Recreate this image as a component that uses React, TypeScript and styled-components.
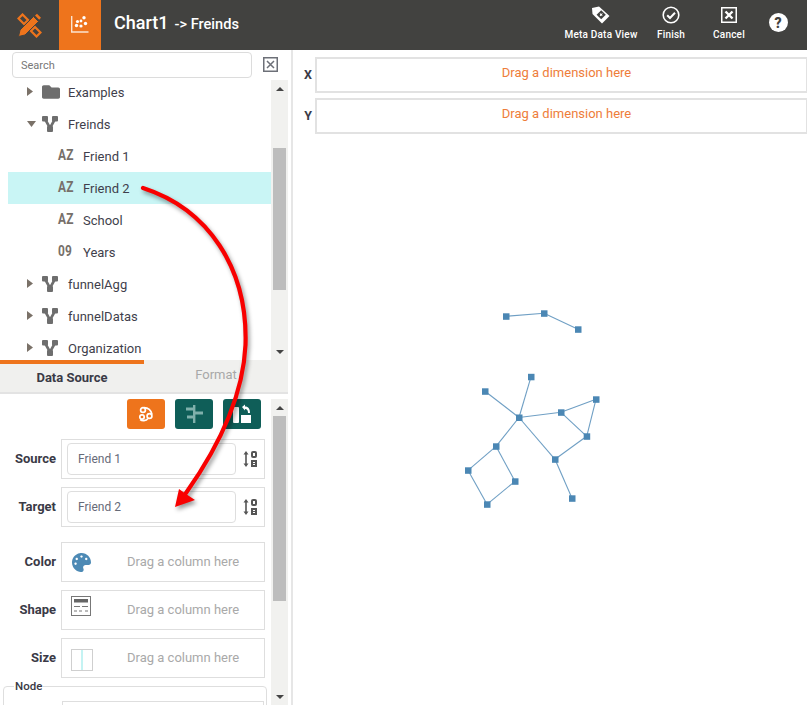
import React from "react";
import styled, { createGlobalStyle } from "styled-components";
import { FaFolder, FaPalette } from "react-icons/fa";

const Global = createGlobalStyle`
  html, body { margin: 0; padding: 0; height: 705px; overflow: hidden; background: #fff; }
  * { box-sizing: border-box; }
  body { font-family: Roboto, "Liberation Sans", sans-serif; }
`;

const Page = styled.div`
  position: relative;
  width: 807px;
  height: 705px;
  display: flex;
  flex-direction: column;
  overflow: hidden;
`;

const Header = styled.header`
  height: 50px;
  flex: none;
  background: #424240;
  display: flex;
  align-items: stretch;
  color: #fff;
`;
const LogoCell = styled.div`
  width: 59px;
  display: flex;
  align-items: center;
  padding-left: 17px;
`;
const ChartCell = styled.div`
  width: 42px;
  background: #ee741c;
  display: flex;
  align-items: center;
  justify-content: center;
`;
const Title = styled.div`
  margin-left: 13px;
  display: flex;
  align-items: baseline;
  padding-top: 12px;
  font-weight: 500;
`;
const ChartName = styled.span`
  font-size: 18px;
`;
const Crumb = styled.span`
  font-size: 14.6px;
  margin-left: 6px;
`;
const Actions = styled.div`
  margin-left: auto;
  display: flex;
  padding-right: 8px;
`;
const Action = styled.div<{ $w: number }>`
  width: ${(p) => p.$w}px;
  display: flex;
  flex-direction: column;
  align-items: center;
  padding-top: 2px;
`;
const ActionIcon = styled.div`
  height: 26px;
  display: flex;
  align-items: center;
  justify-content: center;
`;
const ActionLabel = styled.span`
  margin-top: 1px;
  font-size: 10px;
  font-weight: 500;
  letter-spacing: 0.2px;
  line-height: 12px;
  white-space: nowrap;
`;
const HelpCell = styled.div`
  width: 42px;
  display: flex;
  justify-content: center;
  padding-top: 13px;
`;
const HelpBadge = styled.span`
  width: 19px;
  height: 19px;
  border-radius: 50%;
  background: #fff;
  color: #424240;
  font-size: 14px;
  font-weight: 900;
  display: flex;
  align-items: center;
  justify-content: center;
`;

const Body = styled.div`
  flex: 1;
  display: flex;
  min-height: 0;
`;
const LeftPane = styled.aside`
  width: 293px;
  flex: none;
  padding-right: 3px;
  border-right: 2px solid #e6e6e6;
  display: flex;
  flex-direction: column;
`;
const SearchRow = styled.div`
  height: 30px;
  flex: none;
  display: flex;
  padding: 2px 0 0 12px;
`;
const SearchBox = styled.div`
  width: 240px;
  height: 26px;
  border: 1px solid #dcdcdc;
  border-radius: 4px;
  padding-left: 8px;
  font-size: 11px;
  color: #777;
  display: flex;
  align-items: center;
`;
const CloseSquare = styled.div`
  margin: 5px 0 0 11px;
  width: 15px;
  height: 15px;
  display: flex;
`;
const TreeArea = styled.div`
  height: 280px;
  flex: none;
  display: flex;
`;
const TreeViewport = styled.div`
  flex: 1;
  overflow: hidden;
  padding-left: 8px;
`;
const TreeRows = styled.div`
  margin-top: -4px;
`;
const Row = styled.div<{ $selected?: boolean; $child?: boolean }>`
  height: 32px;
  display: flex;
  align-items: center;
  padding-left: ${(p) => (p.$child ? 50 : 18)}px;
  background: ${(p) => (p.$selected ? "#c9f5f5" : "transparent")};
  font-size: 13px;
  color: #3f3f4c;
`;
const Expander = styled.span`
  width: 16px;
  height: 12px;
  flex: none;
  display: flex;
  align-items: center;
`;
const NodeIcon = styled.span`
  width: 26px;
  flex: none;
  display: flex;
  align-items: center;
  color: #6e6e6e;
`;
const TypeTag = styled.span`
  width: 25px;
  flex: none;
  font-size: 14px;
  font-weight: 700;
  color: #77706a;
  letter-spacing: 0.2px;
  transform: scaleX(0.85) translateY(-1px);
  transform-origin: left center;
`;

const Track = styled.div`
  width: 17px;
  flex: none;
  background: #f1f1ef;
  display: flex;
  flex-direction: column;
  align-items: center;
`;
const ArrowCell = styled.div<{ $down?: boolean }>`
  height: 17px;
  flex: none;
  margin-top: ${(p) => (p.$down ? "auto" : "0")};
  display: flex;
  align-items: center;
  justify-content: center;
  &::after {
    content: "";
    border-left: 4px solid transparent;
    border-right: 4px solid transparent;
    ${(p) =>
      p.$down ? "border-top: 4px solid #444;" : "border-bottom: 4px solid #444;"}
  }
`;
const Thumb = styled.div<{ $top: number; $h: number }>`
  width: 13px;
  height: ${(p) => p.$h}px;
  margin-top: ${(p) => p.$top}px;
  background: #bdbdbd;
  flex: none;
`;

const Tabs = styled.div`
  height: 34px;
  flex: none;
  position: relative;
  display: flex;
  background: #f0f0ee;
  border-bottom: 2px solid #e3e3e3;
`;
const TabMarker = styled.div`
  position: absolute;
  left: 0;
  top: 0;
  width: 144px;
  height: 4px;
  background: #ee741c;
`;
const Tab = styled.div<{ $active?: boolean }>`
  width: 144px;
  display: flex;
  justify-content: center;
  padding-top: ${(p) => (p.$active ? 10 : 7)}px;
  font-size: 13px;
  line-height: 16px;
  font-weight: ${(p) => (p.$active ? 700 : 400)};
  color: ${(p) => (p.$active ? "#3a3a46" : "#a8a8a8")};
`;

const Panel = styled.div`
  flex: 1;
  min-height: 0;
  display: flex;
  padding-top: 5px;
`;
const PanelContent = styled.div`
  width: 271px;
  flex: none;
  display: flex;
  flex-direction: column;
`;
const ButtonBar = styled.div`
  display: flex;
  justify-content: flex-end;
  gap: 10px;
  padding-right: 10px;
  margin-bottom: 10px;
`;
const ToolButton = styled.div<{ $bg: string }>`
  width: 38px;
  height: 30px;
  border-radius: 3px;
  background: ${(p) => p.$bg};
  display: flex;
  align-items: center;
  justify-content: center;
`;
const FieldRow = styled.div<{ $mb: number }>`
  display: flex;
  align-items: center;
  margin-bottom: ${(p) => p.$mb}px;
`;
const FieldLabel = styled.div`
  width: 56px;
  padding-bottom: 2px;
  text-align: right;
  font-size: 13px;
  font-weight: 700;
  color: #3a3a46;
`;
const FieldBox = styled.div`
  margin-left: 5px;
  width: 204px;
  height: 40px;
  border: 1px solid #dedede;
  display: flex;
  align-items: center;
  padding-left: 5px;
`;
const FieldInput = styled.div`
  width: 169px;
  height: 32px;
  border: 1px solid #dedede;
  border-radius: 4px;
  padding-left: 10px;
  font-size: 12px;
  color: #666a78;
  display: flex;
  align-items: center;
`;
const SortWrap = styled.div`
  margin-left: 6px;
  display: flex;
`;
const ColumnIcon = styled.div`
  width: 60px;
  flex: none;
  display: flex;
  align-items: center;
`;
const DragHint = styled.span`
  flex: 1;
  padding-bottom: 2px;
  font-size: 13px;
  color: #a9a9a9;
`;
const NodeSet = styled.fieldset`
  margin: 0 4px 0 3px;
  padding: 0;
  height: 60px;
  border: 1px solid #dedede;
  border-radius: 4px;
  min-width: 0;
`;
const NodeLegend = styled.legend`
  margin-left: 10px;
  padding: 0 1px;
  font-size: 11.5px;
  line-height: 10px;
  font-weight: 500;
  color: #3a3a46;
`;
const NodeInner = styled.div`
  margin: 10px 2px 0 58px;
  height: 30px;
  border: 1px solid #dedede;
`;

const RightPane = styled.main`
  flex: 1;
  min-width: 0;
  position: relative;
  display: flex;
  flex-direction: column;
  padding-top: 7px;
  gap: 5px;
`;
const DropRow = styled.div`
  display: flex;
  align-items: center;
`;
const AxisLabel = styled.div`
  width: 22px;
  padding: 0 3px 2px 0;
  text-align: right;
  font-size: 12.5px;
  font-weight: 700;
  color: #3a3a46;
`;
const DropBox = styled.div`
  flex: 1;
  height: 36px;
  padding-left: 10px;
  border: 2px solid #e2e2e2;
  border-right-width: 1px;
  text-align: center;
  font-size: 13px;
  line-height: 28px;
  color: #ee7d3a;
`;
const GraphCanvas = styled.svg`
  flex: 1;
  display: block;
  width: 100%;
`;
const ArrowOverlay = styled.svg`
  position: absolute;
  left: 0;
  top: 0;
  width: 808px;
  height: 705px;
  pointer-events: none;
  filter: drop-shadow(2px 3px 2px rgba(0, 0, 0, 0.4));
`;

const Caret = ({ down }: { down?: boolean }) =>
  down ? (
    <svg width="12" height="8" viewBox="0 0 12 8">
      <path d="M1 1h9L5.5 7z" fill="#7a7168" />
    </svg>
  ) : (
    <svg width="8" height="12" viewBox="0 0 8 12">
      <path d="M1 1v9l6-4.5z" fill="#7a7168" />
    </svg>
  );

const GraphGlyph = () => (
  <svg width="16" height="16" viewBox="0 0 16 16" fill="#6e6e6e">
    <rect x="0" y="0" width="6" height="5.5" rx="1" />
    <rect x="10" y="0" width="6" height="5.5" rx="1" />
    <rect x="5" y="10" width="6" height="6" rx="1" />
    <path d="M3 3 L8 12 L13 3" fill="none" stroke="#6e6e6e" strokeWidth="2.6" />
  </svg>
);

const SortGlyph = () => (
  <svg width="16" height="18" viewBox="0 0 16 18">
    <path d="M4 1 L1.5 4.5H3.2V13.5H1.5L4 17L6.5 13.5H4.8V4.5H6.5Z" fill="#555" />
    <rect x="9" y="1" width="6" height="7" rx="2" fill="#555" />
    <rect x="11" y="3" width="2" height="3" fill="#fff" />
    <rect x="9" y="10" width="6" height="7" fill="#555" />
    <rect x="11" y="12" width="2" height="1" fill="#fff" />
    <rect x="11" y="14" width="2" height="1" fill="#fff" />
  </svg>
);

const tree = [
  { label: "Examples", kind: "folder" },
  { label: "Freinds", kind: "graph", open: true },
  { label: "Friend 1", tag: "AZ" },
  { label: "Friend 2", tag: "AZ", selected: true },
  { label: "School", tag: "AZ" },
  { label: "Years", tag: "09" },
  { label: "funnelAgg", kind: "graph" },
  { label: "funnelDatas", kind: "graph" },
  { label: "Organization", kind: "graph" },
];

const nodes: Record<string, [number, number]> = {
  a: [506, 316.3], b: [544, 313.3], c: [578, 329.3],
  d: [531, 376.8], e: [485, 391.3], f: [519, 417.5], g: [561, 412.3],
  h: [596, 399.3], i: [586.7, 436.3], j: [555, 459.3], k: [572, 498.3],
  l: [496, 446.3], m: [468, 470.3], n: [515, 481.3], o: [487, 504.3],
};
const edges = ["ab", "bc", "df", "ef", "fg", "gh", "hi", "gi", "ij", "fj", "jk", "fl", "lm", "ln", "mo", "no"];

const GRAPH_LEFT = 293;
const GRAPH_TOP = 139;

export default function App() {
  return (
    <Page>
      <Global />
      <Header>
        <LogoCell>
          <svg width="25" height="25" viewBox="0 0 25 25" fill="none">
            <path d="M1.5 5.5 L5.5 1.5 L11 7 L7 11 Z" stroke="#ee741c" strokeWidth="2.2" />
            <path d="M14 18 L18 14 L23.5 19.5 L19.5 23.5 Z" stroke="#ee741c" strokeWidth="2.2" />
            <path d="M1.5 23.5 L3 17 L16.5 3.5 L21.5 8.5 L8 22 Z" fill="#ee741c" stroke="#424240" strokeWidth="1" />
            <path d="M18 2.5 L20 0.8 L24 4.8 L22.2 6.8 Z" fill="#ee741c" />
          </svg>
        </LogoCell>
        <ChartCell>
          <svg width="18" height="18" viewBox="0 0 18 18" fill="#fff">
            <path d="M0.7 0V16H17.5" fill="none" stroke="#fbe3cf" strokeWidth="1.4" />
            <circle cx="5.5" cy="9.5" r="1.7" />
            <circle cx="10" cy="10" r="1.6" />
            <circle cx="6.5" cy="5.5" r="1.6" />
            <circle cx="10" cy="5" r="1.4" />
            <circle cx="14.5" cy="7.5" r="1.7" />
            <circle cx="13" cy="1.8" r="1.7" />
          </svg>
        </ChartCell>
        <Title>
          <ChartName>Chart1</ChartName>
          <Crumb>-&gt; Freinds</Crumb>
        </Title>
        <Actions>
          <Action $w={80}>
            <ActionIcon>
              <svg width="20" height="20" viewBox="0 0 20 20">
                <path d="M1 3 L8 1.5 L18.5 11 L11 18.5 L1.5 9 Z" fill="#fff" />
                <rect x="7" y="6.5" width="6.5" height="6.5" transform="rotate(45 10.2 9.7)" fill="#424240" />
                <path d="M8.5 9.7 L11.7 9.7 M10.2 8 L10.2 11.4" stroke="#fff" strokeWidth="1" transform="rotate(45 10.2 9.7)" />
              </svg>
            </ActionIcon>
            <ActionLabel>Meta Data View</ActionLabel>
          </Action>
          <Action $w={60}>
            <ActionIcon>
              <svg width="18" height="18" viewBox="0 0 18 18" fill="none" stroke="#fff">
                <circle cx="9" cy="9" r="7.8" strokeWidth="1.6" />
                <path d="M5.2 9.2 L8 12 L13 6.8" strokeWidth="2" />
              </svg>
            </ActionIcon>
            <ActionLabel>Finish</ActionLabel>
          </Action>
          <Action $w={56}>
            <ActionIcon>
              <svg width="16" height="16" viewBox="0 0 16 16" fill="none" stroke="#fff">
                <rect x="0.75" y="0.75" width="14.5" height="14.5" strokeWidth="1.5" />
                <path d="M4.5 4.5 L11.5 11.5 M11.5 4.5 L4.5 11.5" strokeWidth="2.4" />
              </svg>
            </ActionIcon>
            <ActionLabel>Cancel</ActionLabel>
          </Action>
          <HelpCell>
            <HelpBadge>?</HelpBadge>
          </HelpCell>
        </Actions>
      </Header>
      <Body>
        <LeftPane>
          <SearchRow>
            <SearchBox>Search</SearchBox>
            <CloseSquare>
              <svg width="15" height="15" viewBox="0 0 15 15" fill="none" stroke="#6d7078">
                <rect x="0.75" y="0.75" width="13.5" height="13.5" strokeWidth="1.5" />
                <path d="M4 4 L11 11 M11 4 L4 11" strokeWidth="1.5" />
              </svg>
            </CloseSquare>
          </SearchRow>
          <TreeArea>
            <TreeViewport>
              <TreeRows>
                {tree.map((t) =>
                  t.tag ? (
                    <Row key={t.label} $child $selected={t.selected}>
                      <TypeTag>{t.tag}</TypeTag>
                      {t.label}
                    </Row>
                  ) : (
                    <Row key={t.label}>
                      <Expander>
                        <Caret down={t.open} />
                      </Expander>
                      <NodeIcon>
                        {t.kind === "folder" ? <FaFolder size={18} /> : <GraphGlyph />}
                      </NodeIcon>
                      {t.label}
                    </Row>
                  )
                )}
              </TreeRows>
            </TreeViewport>
            <Track>
              <ArrowCell />
              <Thumb $top={51} $h={142} />
              <ArrowCell $down />
            </Track>
          </TreeArea>
          <Tabs>
            <TabMarker />
            <Tab $active>Data Source</Tab>
            <Tab>Format</Tab>
          </Tabs>
          <Panel>
            <PanelContent>
              <ButtonBar>
                <ToolButton $bg="#ee741c">
                  <svg width="18" height="18" viewBox="0 0 18 18" fill="none" stroke="#fff" strokeWidth="1.7">
                    <circle cx="6" cy="5" r="2.4" />
                    <circle cx="12.5" cy="11" r="2.4" />
                    <circle cx="5" cy="12" r="2.2" />
                    <path d="M7 2.6 C11 2.6 14 5 15 9.5 M3.2 14.6 C5 16 9 16.2 11 13.5" />
                  </svg>
                </ToolButton>
                <ToolButton $bg="#0f5e58">
                  <svg width="18" height="18" viewBox="0 0 18 18" fill="#7fb0ab">
                    <rect x="8" y="0" width="2.4" height="18" />
                    <rect x="1" y="2.5" width="8" height="3" />
                    <rect x="10" y="6.5" width="8" height="3" />
                    <rect x="2" y="10.5" width="7" height="3" />
                  </svg>
                </ToolButton>
                <ToolButton $bg="#0f5e58">
                  <svg width="20" height="20" viewBox="0 0 20 20" fill="#fff">
                    <rect x="1" y="3" width="6" height="16" rx="1" />
                    <path d="M9 11h10v8H9z" />
                    <path d="M10 3 L13 0.5 V2.5 C16.5 2.5 18 5 18 9 H16 C16 6.5 15 5 13 5 V6.5 Z" />
                  </svg>
                </ToolButton>
              </ButtonBar>
              <FieldRow $mb={8}>
                <FieldLabel>Source</FieldLabel>
                <FieldBox>
                  <FieldInput>Friend 1</FieldInput>
                  <SortWrap><SortGlyph /></SortWrap>
                </FieldBox>
              </FieldRow>
              <FieldRow $mb={15}>
                <FieldLabel>Target</FieldLabel>
                <FieldBox>
                  <FieldInput>Friend 2</FieldInput>
                  <SortWrap><SortGlyph /></SortWrap>
                </FieldBox>
              </FieldRow>
              <FieldRow $mb={8}>
                <FieldLabel>Color</FieldLabel>
                <FieldBox>
                  <ColumnIcon>
                    <FaPalette size={19} color="#4d8ab5" style={{ marginLeft: 5 }} />
                  </ColumnIcon>
                  <DragHint>Drag a column here</DragHint>
                </FieldBox>
              </FieldRow>
              <FieldRow $mb={8}>
                <FieldLabel>Shape</FieldLabel>
                <FieldBox>
                  <ColumnIcon>
                    <svg width="20" height="20" viewBox="0 0 20 20" style={{ marginLeft: 4, marginTop: -8 }}>
                      <rect x="0.5" y="0.5" width="19" height="19" fill="none" stroke="#777" />
                      <rect x="3" y="3" width="14" height="3.5" fill="#666" />
                      <path d="M3 10.5h6M11 10.5h6M3 15h3M8 15h3M14 15h3" stroke="#777" strokeWidth="1.2" />
                    </svg>
                  </ColumnIcon>
                  <DragHint>Drag a column here</DragHint>
                </FieldBox>
              </FieldRow>
              <FieldRow $mb={3}>
                <FieldLabel>Size</FieldLabel>
                <FieldBox>
                  <ColumnIcon>
                    <svg width="22" height="22" viewBox="0 0 22 22" style={{ marginLeft: 4, marginTop: 3 }}>
                      <rect x="0.5" y="0.5" width="21" height="21" fill="none" stroke="#cfcfcf" />
                      <rect x="10" y="1" width="2" height="20" fill="#c4f3f3" />
                    </svg>
                  </ColumnIcon>
                  <DragHint>Drag a column here</DragHint>
                </FieldBox>
              </FieldRow>
              <NodeSet>
                <NodeLegend>Node</NodeLegend>
                <NodeInner />
              </NodeSet>
            </PanelContent>
            <Track>
              <ArrowCell />
              <Thumb $top={0} $h={185} />
              <ArrowCell $down />
            </Track>
          </Panel>
        </LeftPane>
        <RightPane>
          <DropRow>
            <AxisLabel>X</AxisLabel>
            <DropBox>Drag a dimension here</DropBox>
          </DropRow>
          <DropRow>
            <AxisLabel>Y</AxisLabel>
            <DropBox>Drag a dimension here</DropBox>
          </DropRow>
          <GraphCanvas viewBox={`${GRAPH_LEFT} ${GRAPH_TOP} 514 566`} preserveAspectRatio="xMinYMin">
            {edges.map((e) => {
              const [x1, y1] = nodes[e[0]];
              const [x2, y2] = nodes[e[1]];
              return <line key={e} x1={x1} y1={y1} x2={x2} y2={y2} stroke="#6f9fc4" strokeWidth="1.1" />;
            })}
            {Object.entries(nodes).map(([k, [x, y]]) => (
              <rect key={k} x={x - 3} y={y - 3} width="6.5" height="6.5" fill="#4b87b4" />
            ))}
          </GraphCanvas>
        </RightPane>
      </Body>
      <ArrowOverlay viewBox="0 0 808 705">
        <path d="M143 188 C208 209 248 268 245.5 345 C243 400 215 452 186 493" fill="none" stroke="#f80000" strokeWidth="4.2" strokeLinecap="round" />
        <path d="M175 507 L179 489 L186 494 L195 500 Z" fill="#f80000" />
      </ArrowOverlay>
    </Page>
  );
}
